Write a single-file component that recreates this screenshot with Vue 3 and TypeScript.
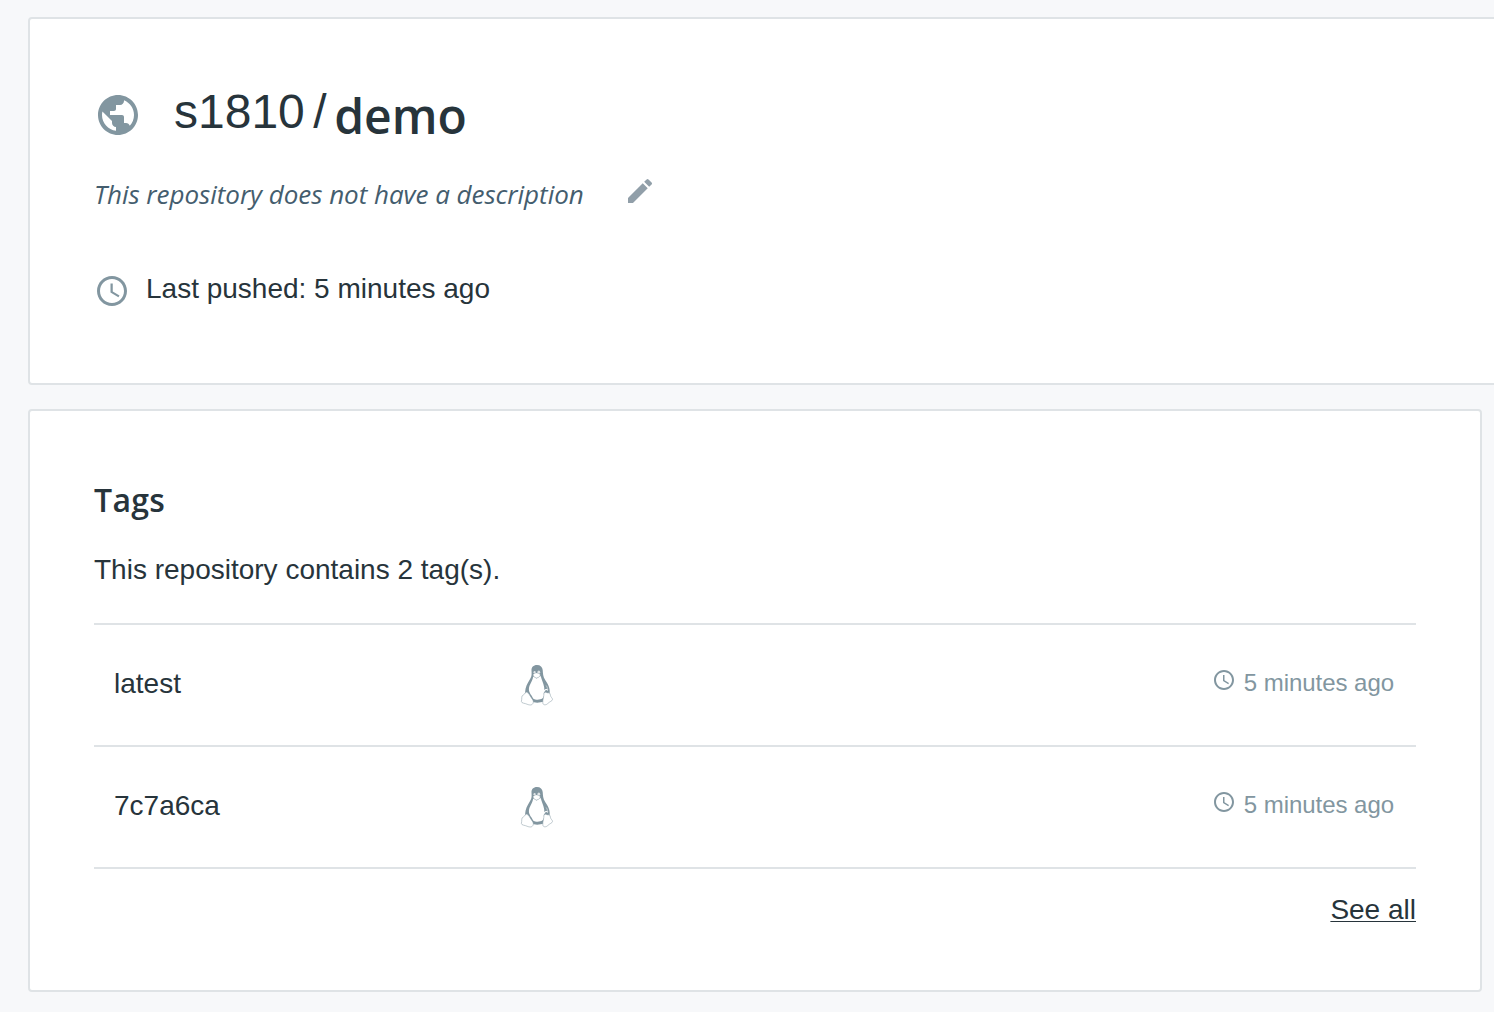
<script setup lang="ts">
interface Tag {
  name: string
  updated: string
}

const owner = 's1810'
const repository = 'demo'
const tags: Tag[] = [
  { name: 'latest', updated: '5 minutes ago' },
  { name: '7c7a6ca', updated: '5 minutes ago' },
]
const clockPath =
  'M11.99 2C6.47 2 2 6.48 2 12s4.47 10 9.99 10C17.52 22 22 17.52 22 12S17.52 2 11.99 2zM12 20c-4.42 0-8-3.58-8-8s3.58-8 8-8 8 3.58 8 8-3.58 8-8 8zm.5-13H11v6l5.25 3.15.75-1.23-4.5-2.67z'
</script>

<template>
  <main class="page">
    <section class="card summary">
      <header class="title">
        <svg class="globe" viewBox="0 0 24 24">
          <path d="M12 2C6.48 2 2 6.48 2 12s4.48 10 10 10 10-4.48 10-10S17.52 2 12 2zm-1 17.93c-3.95-.49-7-3.85-7-7.93 0-.62.08-1.21.21-1.79L9 15v1c0 1.1.9 2 2 2v1.93zm6.9-2.54c-.26-.81-1-1.39-1.9-1.39h-1v-3c0-.55-.45-1-1-1H8v-2h2c.55 0 1-.45 1-1V7h2c1.1 0 2-.9 2-2v-.41c2.93 1.19 5 4.06 5 7.41 0 2.08-.8 3.97-2.1 5.39z" />
        </svg>
        <span class="owner">{{ owner }}</span>
        <span class="slash">/</span>
        <h1 class="repo">{{ repository }}</h1>
      </header>
      <div class="description">
        <em>This repository does not have a description</em>
        <svg class="pencil" viewBox="0 0 24 24">
          <path d="M3 17.25V21h3.75L17.81 9.94l-3.75-3.75L3 17.25zM20.71 7.04a.996.996 0 0 0 0-1.41l-2.34-2.34a.996.996 0 0 0-1.41 0l-1.83 1.83 3.75 3.75 1.83-1.83z" />
        </svg>
      </div>
      <div class="pushed">
        <svg class="clock" viewBox="0 0 24 24"><path :d="clockPath" /></svg>
        <span>Last pushed: 5 minutes ago</span>
      </div>
    </section>

    <section class="card tags">
      <h2>Tags</h2>
      <p>This repository contains {{ tags.length }} tag(s).</p>
      <ul>
        <li v-for="tag in tags" :key="tag.name">
          <span class="name">{{ tag.name }}</span>
          <svg class="tux" viewBox="0 0 34 42">
            <path d="M17 1C13.300 1 11.400 3.300 11.500 6.500C11.600 9.500 12 11.500 10.600 14C8.800 17.500 6.600 20 5.600 24.500C5.200 27 5 28.500 5.400 30L11 37.500C14.500 39 20 39 23.500 37.500L29.600 30C30.500 24.500 27.800 19.500 25.200 16C22.900 12.800 23 9.500 22.700 6C22.400 3 20.400 1 17 1Z" />
            <path class="belly" d="M13.200 12.500L16.600 14.500L20.700 12C21.600 16 23.400 19 24.200 23.500C24.600 27 23.600 27.500 24 31C24.200 34 21.500 35.500 17.500 35.700C14.500 35.900 13.200 35 12.600 33.500C11.500 31 8.700 28.500 8.900 25C9.100 20.500 12.500 17.500 13.200 12.500Z" />
            <ellipse class="eye" cx="14.600" cy="8.300" rx="1.100" ry="1.400" />
            <ellipse class="eye" cx="18.800" cy="8.200" rx="1.400" ry="1.600" />
            <path class="beak" d="M13 10.500C14.300 9.300 16 8.600 17 9C18.500 9.400 20 10 20.400 10.900C20.200 12.500 17.500 14 16.200 14C14.700 13.600 13.200 12 13 10.500Z" />
            <path class="foot" d="M5.700 28.200C7.400 27.600 9 30 10.300 32.200C12 35 14 36.800 13.200 38.800C12.400 41.500 9.500 41.300 7 40.200C5 39.200 1.500 39.300 1.400 37.600C1.300 36 2.100 35 1.800 33.200C1.500 30.900 4.300 31.600 5.700 28.200Z" />
            <path class="foot" d="M24 29C25 27.300 26.300 28.800 28 28.900C29.300 28.700 30.200 29 30.400 31.300C30.500 33 32.700 34.200 32.500 35.600C32.300 37 29.500 37.700 27.800 39.500C26 41.300 23 41.400 22.800 38.800C22.600 35.500 24 32.500 24 29Z" />
            <path class="shine" d="M24.500 27.700C24 26 26 24.700 28 26.200" />
            <path class="wing" d="M26.200 21.500C27.200 23 27.500 24 27.300 25.200" />
          </svg>
          <span class="updated">
            <svg class="small-clock" viewBox="0 0 24 24"><path :d="clockPath" /></svg>
            <span>{{ tag.updated }}</span>
          </span>
        </li>
      </ul>
      <a class="all" href="#">See all</a>
    </section>
  </main>
</template>

<style>
body {
  margin: 0;
  background: #f7f8fa;
}
</style>

<style scoped>
* {
  box-sizing: border-box;
}
.page {
  height: 1012px;
  padding: 17px 12px 0 28px;
  overflow: hidden;
  color: #27343b;
  font: 28px/32px "Liberation Sans", Arial, sans-serif;
}
svg {
  display: block;
  flex: none;
  fill: #8296a0;
}
h1, h2, p, ul {
  margin: 0;
  padding: 0;
  font-weight: 400;
}
.card {
  padding: 0 64px;
  border: 2px solid #dfe3e6;
  border-radius: 4px;
  background: #fff;
}
.summary {
  width: 1480px;
  height: 368px;
  padding-top: 63px;
}
.title {
  display: flex;
  height: 68px;
}
.globe {
  width: 48px;
  height: 48px;
  margin-top: 9px;
}
.owner, .slash {
  margin-top: 3px;
  font-size: 48px;
  line-height: 54px;
}
.owner {
  margin-left: 32px;
}
.slash {
  margin-left: 8.5px;
}
.repo {
  margin: 1px 0 0 7.5px;
  font: 600 48px/66px "Open Sans", sans-serif;
}
.description {
  display: flex;
  height: 36px;
  margin-top: 26px;
  color: #445d6e;
}
.description em {
  width: 530px;
  font: italic 26px/36px "Open Sans", sans-serif;
  letter-spacing: -0.035px;
  white-space: nowrap;
}
.pencil {
  width: 32px;
  height: 32px;
  margin-top: -1px;
  fill: #919fa9;
}
.pushed {
  display: flex;
  gap: 16px;
  margin-top: 61px;
}
.clock {
  width: 36px;
  height: 36px;
}
.tags {
  display: flex;
  flex-direction: column;
  height: 583px;
  margin-top: 24px;
  padding-top: 67px;
}
h2 {
  font: 600 32px/44px "Open Sans", sans-serif;
  letter-spacing: 0.3px;
}
p {
  margin-top: 32px;
}
ul {
  margin-top: 37px;
  border-top: 2px solid #dfe3e6;
  list-style: none;
}
li {
  display: flex;
  align-items: center;
  height: 122px;
  padding: 0 22px 0 20px;
  border-bottom: 2px solid #dfe3e6;
}
.name {
  width: 406px;
  margin-bottom: 2px;
}
.tux {
  width: 34px;
  height: 42px;
}
.tux .belly, .tux .eye, .tux .beak, .tux .foot {
  fill: #fff;
}
.tux .eye {
  opacity: 0.75;
}
.tux .beak, .tux .foot {
  stroke: #8296a0;
  stroke-width: 0.5;
}
.tux .beak {
  stroke-width: 0.3;
}
.tux .shine, .tux .wing {
  fill: none;
  stroke: #fff;
  stroke-width: 1.2;
}
.tux .wing {
  stroke-width: 0.5;
}
.updated {
  display: flex;
  gap: 8px;
  margin: 0 0 4px auto;
  color: #8296a0;
  font-size: 24px;
  line-height: 28px;
  letter-spacing: -0.04px;
}
.small-clock {
  width: 24px;
  height: 24px;
  margin-top: -1px;
}
.all {
  align-self: flex-end;
  margin-top: 25px;
  color: inherit;
  text-decoration: underline;
  text-decoration-thickness: 1px;
  text-underline-offset: 2px;
}
</style>
